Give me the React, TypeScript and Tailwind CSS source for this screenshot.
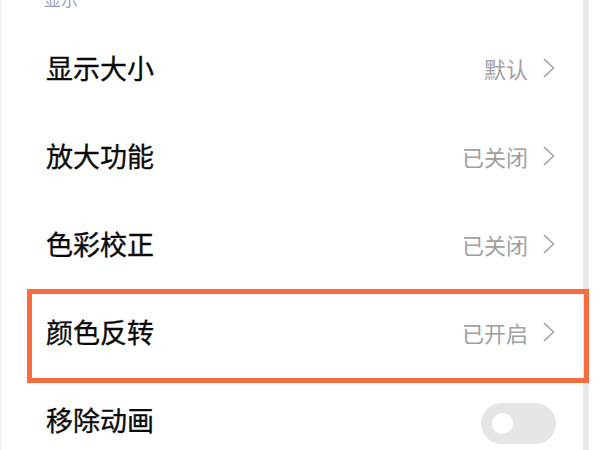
import React from "react";

const Chevron = () => (
  <svg width="12" height="20" viewBox="0 0 12 20" fill="none">
    <polyline points="1.5,1.5 10.5,10 1.5,18.5" stroke="#a6a6a6" strokeWidth="1.7" strokeLinecap="round" strokeLinejoin="round" />
  </svg>
);

const Row = ({ label, value }: { label: string; value?: string }) => (
  <div className="h-[88px] shrink-0 flex items-center justify-between pl-[44px] pr-[28px]">
    <span className="mb-[4px] text-[27px] leading-none text-[#0a0a0a] font-normal [-webkit-text-stroke:0.35px_#0a0a0a]">{label}</span>
    {value !== undefined ? (
      <div className="mb-[3px] flex items-center gap-[15px]">
        <span className="text-[22px] leading-none text-[#a0a0a0]">{value}</span>
        <Chevron />
      </div>
    ) : (
      <div className="mt-[4px] w-[75px] h-[41px] rounded-full bg-[#e6e6e6] flex items-center pl-[11px] mr-[-1px]">
        <div className="w-[21px] h-[21px] rounded-full bg-white" />
      </div>
    )}
  </div>
);

export default function App() {
  return (
    <div
      className="w-[600px] h-[450px] overflow-hidden bg-white flex relative"
      style={{ fontFamily: '"Noto Sans CJK SC", "Noto Sans", sans-serif' }}
    >
      <div className="w-[2px] shrink-0 bg-[#f3f3f3]" />
      <div className="flex-1 flex flex-col">
        <div className="-mt-[10px] h-[17px] shrink-0 pl-[42px] text-[17px] leading-[17px] text-[#9ba1bc]">显示</div>
        <div className="h-[18px] shrink-0" />
        <Row label="显示大小" value="默认" />
        <Row label="放大功能" value="已关闭" />
        <Row label="色彩校正" value="已关闭" />
        <Row label="颜色反转" value="已开启" />
        <Row label="移除动画" />
      </div>
      <div className="w-[6px] shrink-0 bg-[#e8e8e8]" />
      <div className="w-[11px] shrink-0" />
      <div className="absolute left-[27px] top-[289px] w-[562px] h-[94px] border-[5px] border-[#f76d40]" />
    </div>
  );
}
